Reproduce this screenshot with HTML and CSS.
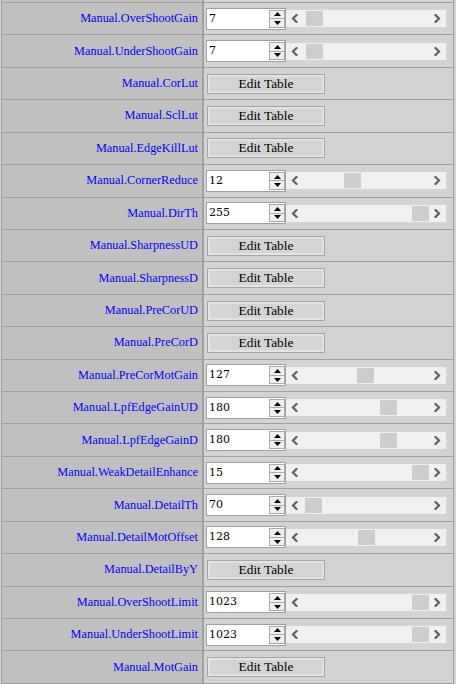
FILE: index.html
```html
<!DOCTYPE html>
<html>
<head>
<meta charset="utf-8">
<link rel="stylesheet" href="styles.css">
</head>
<body>
<div class="sheet">
  <div class="row stub"><div class="label"></div><div class="value"></div></div>

  <div class="row"><div class="label">Manual.OverShootGain</div><div class="value">
    <div class="num"><span class="val">7</span><span class="spin"><span class="sb"><svg width="7" height="4" viewBox="0 0 7 4"><polygon points="0,4 7,4 3.5,0"/></svg></span><span class="sb"><svg width="7" height="4" viewBox="0 0 7 4"><polygon points="0,0 7,0 3.5,4"/></svg></span></span></div>
    <div class="slider"><span class="arr"><svg width="7" height="9" viewBox="0 0 7 9"><path d="M5.5 1 L2 4.5 L5.5 8"/></svg></span><span class="thumb" style="left:20px"></span><span class="arr"><svg width="7" height="9" viewBox="0 0 7 9"><path d="M1.5 1 L5 4.5 L1.5 8"/></svg></span></div>
  </div></div>

  <div class="row"><div class="label">Manual.UnderShootGain</div><div class="value">
    <div class="num"><span class="val">7</span><span class="spin"><span class="sb"><svg width="7" height="4" viewBox="0 0 7 4"><polygon points="0,4 7,4 3.5,0"/></svg></span><span class="sb"><svg width="7" height="4" viewBox="0 0 7 4"><polygon points="0,0 7,0 3.5,4"/></svg></span></span></div>
    <div class="slider"><span class="arr"><svg width="7" height="9" viewBox="0 0 7 9"><path d="M5.5 1 L2 4.5 L5.5 8"/></svg></span><span class="thumb" style="left:20px"></span><span class="arr"><svg width="7" height="9" viewBox="0 0 7 9"><path d="M1.5 1 L5 4.5 L1.5 8"/></svg></span></div>
  </div></div>

  <div class="row"><div class="label">Manual.CorLut</div><div class="value"><span class="btn">Edit Table</span></div></div>
  <div class="row"><div class="label">Manual.SclLut</div><div class="value"><span class="btn">Edit Table</span></div></div>
  <div class="row"><div class="label">Manual.EdgeKillLut</div><div class="value"><span class="btn">Edit Table</span></div></div>

  <div class="row"><div class="label">Manual.CornerReduce</div><div class="value">
    <div class="num"><span class="val">12</span><span class="spin"><span class="sb"><svg width="7" height="4" viewBox="0 0 7 4"><polygon points="0,4 7,4 3.5,0"/></svg></span><span class="sb"><svg width="7" height="4" viewBox="0 0 7 4"><polygon points="0,0 7,0 3.5,4"/></svg></span></span></div>
    <div class="slider"><span class="arr"><svg width="7" height="9" viewBox="0 0 7 9"><path d="M5.5 1 L2 4.5 L5.5 8"/></svg></span><span class="thumb" style="left:58px"></span><span class="arr"><svg width="7" height="9" viewBox="0 0 7 9"><path d="M1.5 1 L5 4.5 L1.5 8"/></svg></span></div>
  </div></div>

  <div class="row"><div class="label">Manual.DirTh</div><div class="value">
    <div class="num"><span class="val">255</span><span class="spin"><span class="sb"><svg width="7" height="4" viewBox="0 0 7 4"><polygon points="0,4 7,4 3.5,0"/></svg></span><span class="sb"><svg width="7" height="4" viewBox="0 0 7 4"><polygon points="0,0 7,0 3.5,4"/></svg></span></span></div>
    <div class="slider"><span class="arr"><svg width="7" height="9" viewBox="0 0 7 9"><path d="M5.5 1 L2 4.5 L5.5 8"/></svg></span><span class="thumb" style="left:126px"></span><span class="arr"><svg width="7" height="9" viewBox="0 0 7 9"><path d="M1.5 1 L5 4.5 L1.5 8"/></svg></span></div>
  </div></div>

  <div class="row"><div class="label">Manual.SharpnessUD</div><div class="value"><span class="btn">Edit Table</span></div></div>
  <div class="row"><div class="label">Manual.SharpnessD</div><div class="value"><span class="btn">Edit Table</span></div></div>
  <div class="row"><div class="label">Manual.PreCorUD</div><div class="value"><span class="btn">Edit Table</span></div></div>
  <div class="row"><div class="label">Manual.PreCorD</div><div class="value"><span class="btn">Edit Table</span></div></div>

  <div class="row"><div class="label">Manual.PreCorMotGain</div><div class="value">
    <div class="num"><span class="val">127</span><span class="spin"><span class="sb"><svg width="7" height="4" viewBox="0 0 7 4"><polygon points="0,4 7,4 3.5,0"/></svg></span><span class="sb"><svg width="7" height="4" viewBox="0 0 7 4"><polygon points="0,0 7,0 3.5,4"/></svg></span></span></div>
    <div class="slider"><span class="arr"><svg width="7" height="9" viewBox="0 0 7 9"><path d="M5.5 1 L2 4.5 L5.5 8"/></svg></span><span class="thumb" style="left:71px"></span><span class="arr"><svg width="7" height="9" viewBox="0 0 7 9"><path d="M1.5 1 L5 4.5 L1.5 8"/></svg></span></div>
  </div></div>

  <div class="row"><div class="label">Manual.LpfEdgeGainUD</div><div class="value">
    <div class="num"><span class="val">180</span><span class="spin"><span class="sb"><svg width="7" height="4" viewBox="0 0 7 4"><polygon points="0,4 7,4 3.5,0"/></svg></span><span class="sb"><svg width="7" height="4" viewBox="0 0 7 4"><polygon points="0,0 7,0 3.5,4"/></svg></span></span></div>
    <div class="slider"><span class="arr"><svg width="7" height="9" viewBox="0 0 7 9"><path d="M5.5 1 L2 4.5 L5.5 8"/></svg></span><span class="thumb" style="left:94px"></span><span class="arr"><svg width="7" height="9" viewBox="0 0 7 9"><path d="M1.5 1 L5 4.5 L1.5 8"/></svg></span></div>
  </div></div>

  <div class="row"><div class="label">Manual.LpfEdgeGainD</div><div class="value">
    <div class="num"><span class="val">180</span><span class="spin"><span class="sb"><svg width="7" height="4" viewBox="0 0 7 4"><polygon points="0,4 7,4 3.5,0"/></svg></span><span class="sb"><svg width="7" height="4" viewBox="0 0 7 4"><polygon points="0,0 7,0 3.5,4"/></svg></span></span></div>
    <div class="slider"><span class="arr"><svg width="7" height="9" viewBox="0 0 7 9"><path d="M5.5 1 L2 4.5 L5.5 8"/></svg></span><span class="thumb" style="left:94px"></span><span class="arr"><svg width="7" height="9" viewBox="0 0 7 9"><path d="M1.5 1 L5 4.5 L1.5 8"/></svg></span></div>
  </div></div>

  <div class="row"><div class="label">Manual.WeakDetailEnhance</div><div class="value">
    <div class="num"><span class="val">15</span><span class="spin"><span class="sb"><svg width="7" height="4" viewBox="0 0 7 4"><polygon points="0,4 7,4 3.5,0"/></svg></span><span class="sb"><svg width="7" height="4" viewBox="0 0 7 4"><polygon points="0,0 7,0 3.5,4"/></svg></span></span></div>
    <div class="slider"><span class="arr"><svg width="7" height="9" viewBox="0 0 7 9"><path d="M5.5 1 L2 4.5 L5.5 8"/></svg></span><span class="thumb" style="left:126px"></span><span class="arr"><svg width="7" height="9" viewBox="0 0 7 9"><path d="M1.5 1 L5 4.5 L1.5 8"/></svg></span></div>
  </div></div>

  <div class="row"><div class="label">Manual.DetailTh</div><div class="value">
    <div class="num"><span class="val">70</span><span class="spin"><span class="sb"><svg width="7" height="4" viewBox="0 0 7 4"><polygon points="0,4 7,4 3.5,0"/></svg></span><span class="sb"><svg width="7" height="4" viewBox="0 0 7 4"><polygon points="0,0 7,0 3.5,4"/></svg></span></span></div>
    <div class="slider"><span class="arr"><svg width="7" height="9" viewBox="0 0 7 9"><path d="M5.5 1 L2 4.5 L5.5 8"/></svg></span><span class="thumb" style="left:19px"></span><span class="arr"><svg width="7" height="9" viewBox="0 0 7 9"><path d="M1.5 1 L5 4.5 L1.5 8"/></svg></span></div>
  </div></div>

  <div class="row"><div class="label">Manual.DetailMotOffset</div><div class="value">
    <div class="num"><span class="val">128</span><span class="spin"><span class="sb"><svg width="7" height="4" viewBox="0 0 7 4"><polygon points="0,4 7,4 3.5,0"/></svg></span><span class="sb"><svg width="7" height="4" viewBox="0 0 7 4"><polygon points="0,0 7,0 3.5,4"/></svg></span></span></div>
    <div class="slider"><span class="arr"><svg width="7" height="9" viewBox="0 0 7 9"><path d="M5.5 1 L2 4.5 L5.5 8"/></svg></span><span class="thumb" style="left:72px"></span><span class="arr"><svg width="7" height="9" viewBox="0 0 7 9"><path d="M1.5 1 L5 4.5 L1.5 8"/></svg></span></div>
  </div></div>

  <div class="row"><div class="label">Manual.DetailByY</div><div class="value"><span class="btn">Edit Table</span></div></div>

  <div class="row"><div class="label">Manual.OverShootLimit</div><div class="value">
    <div class="num"><span class="val">1023</span><span class="spin"><span class="sb"><svg width="7" height="4" viewBox="0 0 7 4"><polygon points="0,4 7,4 3.5,0"/></svg></span><span class="sb"><svg width="7" height="4" viewBox="0 0 7 4"><polygon points="0,0 7,0 3.5,4"/></svg></span></span></div>
    <div class="slider"><span class="arr"><svg width="7" height="9" viewBox="0 0 7 9"><path d="M5.5 1 L2 4.5 L5.5 8"/></svg></span><span class="thumb" style="left:126px"></span><span class="arr"><svg width="7" height="9" viewBox="0 0 7 9"><path d="M1.5 1 L5 4.5 L1.5 8"/></svg></span></div>
  </div></div>

  <div class="row"><div class="label">Manual.UnderShootLimit</div><div class="value">
    <div class="num"><span class="val">1023</span><span class="spin"><span class="sb"><svg width="7" height="4" viewBox="0 0 7 4"><polygon points="0,4 7,4 3.5,0"/></svg></span><span class="sb"><svg width="7" height="4" viewBox="0 0 7 4"><polygon points="0,0 7,0 3.5,4"/></svg></span></span></div>
    <div class="slider"><span class="arr"><svg width="7" height="9" viewBox="0 0 7 9"><path d="M5.5 1 L2 4.5 L5.5 8"/></svg></span><span class="thumb" style="left:126px"></span><span class="arr"><svg width="7" height="9" viewBox="0 0 7 9"><path d="M1.5 1 L5 4.5 L1.5 8"/></svg></span></div>
  </div></div>

  <div class="row"><div class="label">Manual.MotGain</div><div class="value"><span class="btn">Edit Table</span></div></div>
</div>
</body>
</html>
```

FILE: styles.css
```css
html, body {
  margin: 0;
  padding: 0;
  background: #d3d3d3;
  overflow: hidden;
}
body {
  font-family: "DejaVu Serif", "Liberation Serif", serif;
  font-size: 12px;
}
.sheet {
  margin-left: 1px;
  width: 451px;
  border-left: 1px solid #a0a0a0;
  border-right: 1px solid #a0a0a0;
}
.row {
  display: grid;
  grid-template-columns: 200px 249px;
  column-gap: 2px;
  background: #a0a0a0;
  border-bottom: 1px solid #a0a0a0;
  height: 32.43px;
  box-sizing: border-box;
}
.row.stub {
  height: 3px;
}
.label {
  background: #c0c0c0;
  color: #0000ff;
  display: flex;
  align-items: center;
  justify-content: flex-end;
  padding-right: 4px;
  font-family: "Liberation Serif", "DejaVu Serif", serif;
  font-size: 12.3px;
  white-space: nowrap;
}
.value {
  background: #d3d3d3;
  display: flex;
  align-items: center;
  padding-left: 2px;
}
.num {
  width: 80px;
  height: 22px;
  box-sizing: border-box;
  border: 1px solid #a0a0a0;
  background: #ffffff;
  display: flex;
  align-items: stretch;
}
.val {
  flex: 1;
  padding-left: 2px;
  font-family: "DejaVu Serif", serif;
  font-size: 11px;
  line-height: 19px;
  color: #000;
}
.spin {
  width: 16px;
  margin: 1px 0 1px 0;
  box-sizing: border-box;
  border: 1px solid #a9a9a9;
  display: flex;
  flex-direction: column;
  background: #f0f0f0;
}
.sb {
  flex: 1;
  display: flex;
  align-items: center;
  justify-content: center;
}
.sb + .sb {
  border-top: 1px solid #a9a9a9;
}
.sb svg {
  display: block;
  fill: #000;
}
.slider {
  position: relative;
  width: 160px;
  height: 17px;
  background: #f0f0f0;
  display: flex;
  justify-content: space-between;
  align-items: center;
}
.arr {
  width: 17px;
  height: 17px;
  display: flex;
  align-items: center;
  justify-content: center;
}
.arr svg {
  display: block;
  fill: none;
  stroke: #606060;
  stroke-width: 2.2;
  stroke-linecap: square;
}
.thumb {
  position: absolute;
  top: 1px;
  width: 17px;
  height: 15px;
  background: #cdcdcd;
}
.btn {
  margin-left: 1px;
  width: 118px;
  height: 20px;
  box-sizing: border-box;
  border: 1px solid #a6a6a6;
  box-shadow: inset 0 0 0 2px #e3e3e3;
  background: #d4d4d4;
  display: flex;
  align-items: center;
  justify-content: center;
  font-family: "Liberation Serif", "DejaVu Serif", serif;
  font-size: 13.4px;
  color: #000;
}
```
